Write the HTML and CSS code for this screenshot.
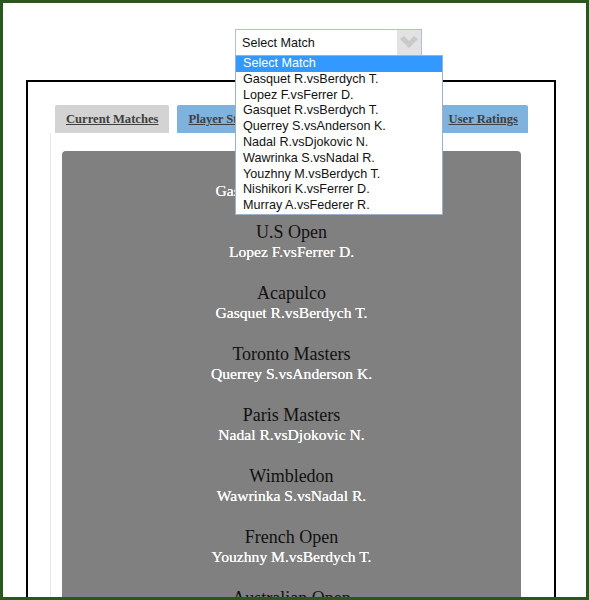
FILE: index.html
```html
<!DOCTYPE html>
<html>
<head>
<meta charset="utf-8">
<link rel="stylesheet" href="styles.css">
</head>
<body>
<div class="frame">
  <div class="picker">
    <div class="select">
      <span class="select-text">Select Match</span>
      <span class="select-arrow">
        <svg width="24" height="25" viewBox="0 0 24 25"><polygon points="3,9 7,6 12,11 17,6 21,9 12,18" fill="#c9c9c9"/></svg>
      </span>
    </div>
    <div class="options">
      <div class="opt sel">Select Match</div>
      <div class="opt">Gasquet R.vsBerdych T.</div>
      <div class="opt">Lopez F.vsFerrer D.</div>
      <div class="opt">Gasquet R.vsBerdych T.</div>
      <div class="opt">Querrey S.vsAnderson K.</div>
      <div class="opt">Nadal R.vsDjokovic N.</div>
      <div class="opt">Wawrinka S.vsNadal R.</div>
      <div class="opt">Youzhny M.vsBerdych T.</div>
      <div class="opt">Nishikori K.vsFerrer D.</div>
      <div class="opt">Murray A.vsFederer R.</div>
    </div>
  </div>
  <div class="box">
    <div class="tabs">
      <a class="tab gray">Current Matches</a>
      <a class="tab blue">Player Statistics</a>
      <a class="tab blue">Head to Head</a>
      <a class="tab blue last">User Ratings</a>
    </div>
    <div class="panel">
      <div class="matches">
        <div class="match"><div class="event">Shanghai</div><div class="players">Gasquet R.vsBerdych T.</div></div>
        <div class="match"><div class="event">U.S Open</div><div class="players">Lopez F.vsFerrer D.</div></div>
        <div class="match"><div class="event">Acapulco</div><div class="players">Gasquet R.vsBerdych T.</div></div>
        <div class="match"><div class="event">Toronto Masters</div><div class="players">Querrey S.vsAnderson K.</div></div>
        <div class="match"><div class="event">Paris Masters</div><div class="players">Nadal R.vsDjokovic N.</div></div>
        <div class="match"><div class="event">Wimbledon</div><div class="players">Wawrinka S.vsNadal R.</div></div>
        <div class="match"><div class="event">French Open</div><div class="players">Youzhny M.vsBerdych T.</div></div>
        <div class="match"><div class="event">Australian Open</div><div class="players">Nishikori K.vsFerrer D.</div></div>
      </div>
    </div>
  </div>
</div>
</body>
</html>
```
FILE: styles.css
```css
html, body {
  margin: 0;
  padding: 0;
  background: #fff;
}
.frame {
  width: 589px;
  height: 600px;
  box-sizing: border-box;
  border: 3px solid #2b561d;
  overflow: hidden;
  position: relative;
  background: #fff;
}
.picker {
  position: relative;
  margin-left: 232px;
  padding-top: 26px;
  width: 208px;
  height: 51px;
}
.select {
  width: 187px;
  height: 27px;
  box-sizing: border-box;
  border: 1px solid #b4c0d2;
  display: flex;
  align-items: center;
  justify-content: space-between;
  font-family: "Liberation Sans", Arial, sans-serif;
  font-size: 12.6px;
  color: #111;
  background: #fff;
}
.select-text {
  padding-left: 6px;
}
.select-arrow {
  width: 24px;
  height: 25px;
  background: #e2e2e2;
  display: flex;
}
.options {
  position: absolute;
  left: 0;
  top: 52px;
  z-index: 5;
  width: 208px;
  box-sizing: border-box;
  border: 1px solid #9fb0c9;
  background: #fff;
  font-family: "Liberation Sans", Arial, sans-serif;
  font-size: 12.6px;
  color: #111;
}
.opt {
  line-height: 15.8px;
  padding-left: 7px;
  white-space: nowrap;
}
.opt.sel {
  background: #3399ff;
  color: #fff;
}
.box {
  margin-left: 23px;
  width: 530px;
  height: 600px;
  box-sizing: border-box;
  border: 2px solid #000;
  border-bottom: none;
  padding: 23px 0 0 22px;
}
.tabs {
  display: flex;
  gap: 8px;
  margin-left: 5px;
  width: 473px;
}
.tab {
  height: 28px;
  box-sizing: border-box;
  padding: 0 11px;
  display: flex;
  align-items: center;
  border-radius: 2px 2px 0 0;
  font-family: "Liberation Serif", "Times New Roman", serif;
  font-weight: bold;
  font-size: 12.6px;
  color: #3f3f3f;
  text-decoration: underline;
  white-space: nowrap;
}
.tab.last {
  margin-left: auto;
  padding: 0 10px 0 9px;
}
.tab.gray {
  background: #d3d3d3;
}
.tab.blue {
  background: #7fb2dc;
}
.panel {
  border-left: 1px solid #e6e6e6;
  padding: 18px 0 0 11px;
  height: 500px;
}
.matches {
  width: 459px;
  height: 500px;
  background: #808080;
  border-radius: 4px;
  padding-top: 10px;
  box-sizing: border-box;
  display: flex;
  flex-direction: column;
  gap: 22px;
  text-align: center;
  font-family: "Liberation Serif", "Times New Roman", serif;
}
.event {
  font-size: 18px;
  line-height: 20px;
  color: #111;
}
.players {
  font-size: 15.6px;
  line-height: 19px;
  color: #fff;
  text-shadow: 0 0 0.4px #fff;
}
```
